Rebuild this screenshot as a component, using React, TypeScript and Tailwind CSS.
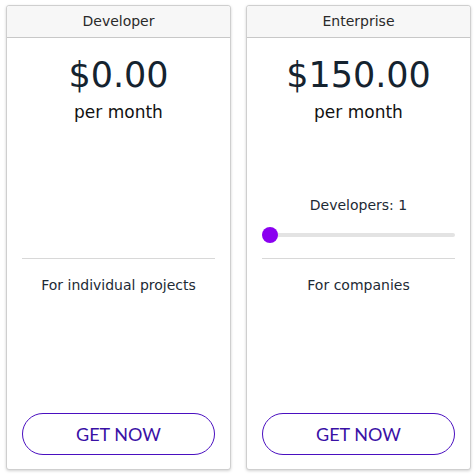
import React from "react";

function Card({ title, price, desc, slider }: { title: string; price: string; desc: string; slider?: boolean }) {
  return (
    <div className="flex w-[225px] flex-col rounded-[3px] border border-[#cfcfcf] bg-white shadow-[0_1px_3px_rgba(0,0,0,0.18)]">
      <div className="flex h-[32px] items-center justify-center rounded-t-[3px] border-b border-[#c8c8c8] bg-[#f7f7f7] text-[14px] text-[#2a2a2a]">
        {title}
      </div>
      <div className="flex flex-1 flex-col px-[15px]">
        <div className="mt-[18px] text-center text-[35px] leading-[38px] text-[#15232f]">{price}</div>
        <div className="mt-[1px] text-center text-[17px] leading-[34px] text-[#111]">per month</div>
        <div className="flex h-[129px] flex-col justify-end">
          {slider && (
            <>
              <div className="text-center text-[14px] leading-[20px] text-[#1d2a35]">Developers: 1</div>
              <div className="relative mt-[18px] mb-[21px] h-[4px] rounded-full bg-[#e3e3e3]">
                <div className="absolute left-0 top-1/2 h-[16px] w-[16px] -translate-y-1/2 rounded-full bg-[#8a00f0]" />
              </div>
            </>
          )}
        </div>
        <div className="h-px bg-[#d8d8d8]" />
        <div className="mt-[16px] text-center text-[14px] leading-[20px] text-[#1d2a35]">{desc}</div>
        <div className="flex-1" />
        <button className="mb-[14px] h-[42px] w-full rounded-full border-[1.5px] border-[#4a0fc0] bg-white font-['Lato',sans-serif] text-[18px] text-[#3a11a6]">
          GET NOW
        </button>
      </div>
    </div>
  );
}

export default function App() {
  return (
    <div className="flex h-[476px] w-[476px] gap-[15px] bg-white pl-[6px] pt-[5px] pb-[6px] font-['DejaVu_Sans',sans-serif]">
      <Card title="Developer" price="$0.00" desc="For individual projects" />
      <Card title="Enterprise" price="$150.00" desc="For companies" slider />
    </div>
  );
}
